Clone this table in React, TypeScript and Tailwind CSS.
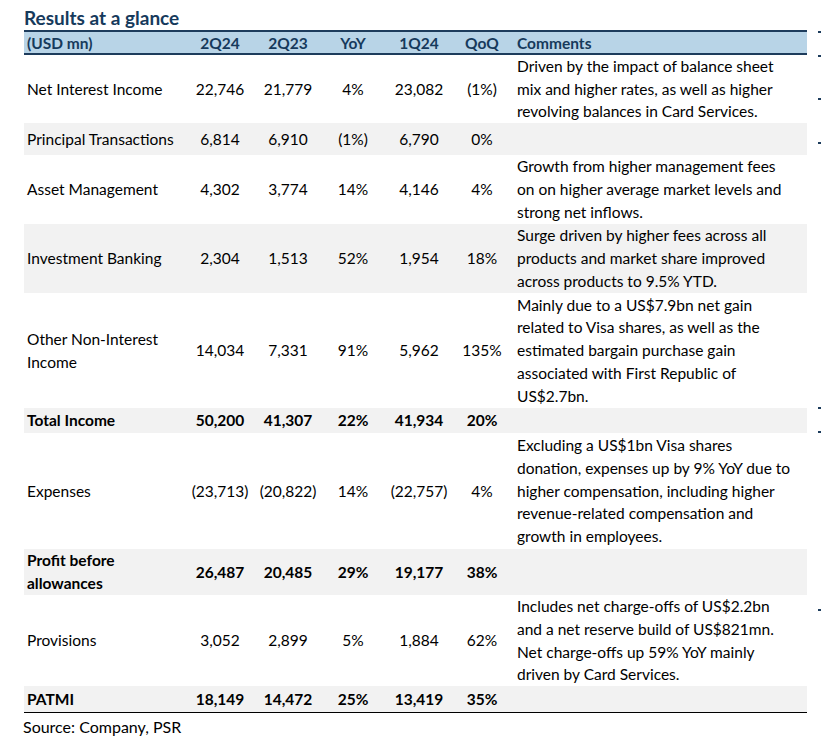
import React from 'react'

type Row = {
  label: string[]
  values: string[]
  comment: string[]
  bold?: boolean
  shaded?: boolean
  h: string
}

const rows: Row[] = [
  {
    label: ['Net Interest Income'],
    values: ['22,746', '21,779', '4%', '23,082', '(1%)'],
    comment: [
      'Driven by the impact of balance sheet',
      'mix and higher rates, as well as higher',
      'revolving balances in Card Services.',
    ],
    h: 'h-[68px]',
  },
  {
    label: ['Principal Transactions'],
    values: ['6,814', '6,910', '(1%)', '6,790', '0%'],
    comment: [],
    shaded: true,
    h: 'h-[32px]',
  },
  {
    label: ['Asset Management'],
    values: ['4,302', '3,774', '14%', '4,146', '4%'],
    comment: [
      'Growth from higher management fees',
      'on on higher average market levels and',
      'strong net inflows.',
    ],
    h: 'h-[69px]',
  },
  {
    label: ['Investment Banking'],
    values: ['2,304', '1,513', '52%', '1,954', '18%'],
    comment: [
      'Surge driven by higher fees across all',
      'products and market share improved',
      'across products to 9.5% YTD.',
    ],
    shaded: true,
    h: 'h-[69px]',
  },
  {
    label: ['Other Non-Interest', 'Income'],
    values: ['14,034', '7,331', '91%', '5,962', '135%'],
    comment: [
      'Mainly due to a US$7.9bn net gain',
      'related to Visa shares, as well as the',
      'estimated bargain purchase gain',
      'associated with First Republic of',
      'US$2.7bn.',
    ],
    h: 'h-[115px]',
  },
  {
    label: ['Total Income'],
    values: ['50,200', '41,307', '22%', '41,934', '20%'],
    comment: [],
    bold: true,
    shaded: true,
    h: 'h-[25px]',
  },
  {
    label: ['Expenses'],
    values: ['(23,713)', '(20,822)', '14%', '(22,757)', '4%'],
    comment: [
      'Excluding a US$1bn Visa shares',
      'donation, expenses up by 9% YoY due to',
      'higher compensation, including higher',
      'revenue-related compensation and',
      'growth in employees.',
    ],
    h: 'h-[116px]',
  },
  {
    label: ['Profit before', 'allowances'],
    values: ['26,487', '20,485', '29%', '19,177', '38%'],
    comment: [],
    bold: true,
    shaded: true,
    h: 'h-[46px]',
  },
  {
    label: ['Provisions'],
    values: ['3,052', '2,899', '5%', '1,884', '62%'],
    comment: [
      'Includes net charge-offs of US$2.2bn',
      'and a net reserve build of US$821mn.',
      'Net charge-offs up 59% YoY mainly',
      'driven by Card Services.',
    ],
    h: 'h-[91px]',
  },
  {
    label: ['PATMI'],
    values: ['18,149', '14,472', '25%', '13,419', '35%'],
    comment: [],
    bold: true,
    shaded: true,
    h: 'h-[27px]',
  },
]

const grid = 'grid grid-cols-[160px_72px_64px_66px_66px_60px_1fr]'

// little page-edge ticks on the right
const ticks = [31, 55, 98, 142, 407, 431, 609]

export default function App() {
  return (
    <div className="relative w-[821px] h-[748px] bg-white text-black font-['Lato','Noto_Sans',sans-serif] text-[15.5px] leading-[22.7px]">
      <div className="ml-[24px] w-[783px]">
        <div className="h-[30px] pt-[6px] text-[19px] leading-[24px] font-bold text-[#163a5c]">
          Results at a glance
        </div>

        {/* header */}
        <div
          className={`${grid} h-[25px] items-center bg-[#b8d4e7] border-y-2 border-[#1d3c5c] font-bold text-[#163a5c]`}
        >
          <div className="pl-[3px]">(USD mn)</div>
          <div className="text-center">2Q24</div>
          <div className="text-center">2Q23</div>
          <div className="text-center">YoY</div>
          <div className="text-center">1Q24</div>
          <div className="text-center">QoQ</div>
          <div className="pl-[5px]">Comments</div>
        </div>

        {rows.map((r, i) => (
          <div
            key={i}
            className={`${grid} ${r.h} items-center ${r.shaded ? 'bg-[#f2f2f2]' : ''} ${
              r.bold ? 'font-bold' : ''
            } ${i === rows.length - 1 ? 'border-b-[1.5px] border-black' : ''}`}
          >
            <div className="pl-[3px] whitespace-nowrap">
              {r.label.map((l) => (
                <div key={l}>{l}</div>
              ))}
            </div>
            {r.values.map((v, j) => (
              <div key={j} className="text-center whitespace-nowrap">
                {v}
              </div>
            ))}
            <div className="pl-[5px] whitespace-nowrap">
              {r.comment.map((c) => (
                <div key={c}>{c}</div>
              ))}
            </div>
          </div>
        ))}
      </div>

      <div className="mt-[3px] text-[16px] leading-[22px] pl-[23px]">Source: Company, PSR</div>

      {ticks.map((t) => (
        <div key={t} className="absolute right-0 w-[3px] h-[2px] bg-[#1d3c5c]" style={{ top: t }} />
      ))}
    </div>
  )
}
